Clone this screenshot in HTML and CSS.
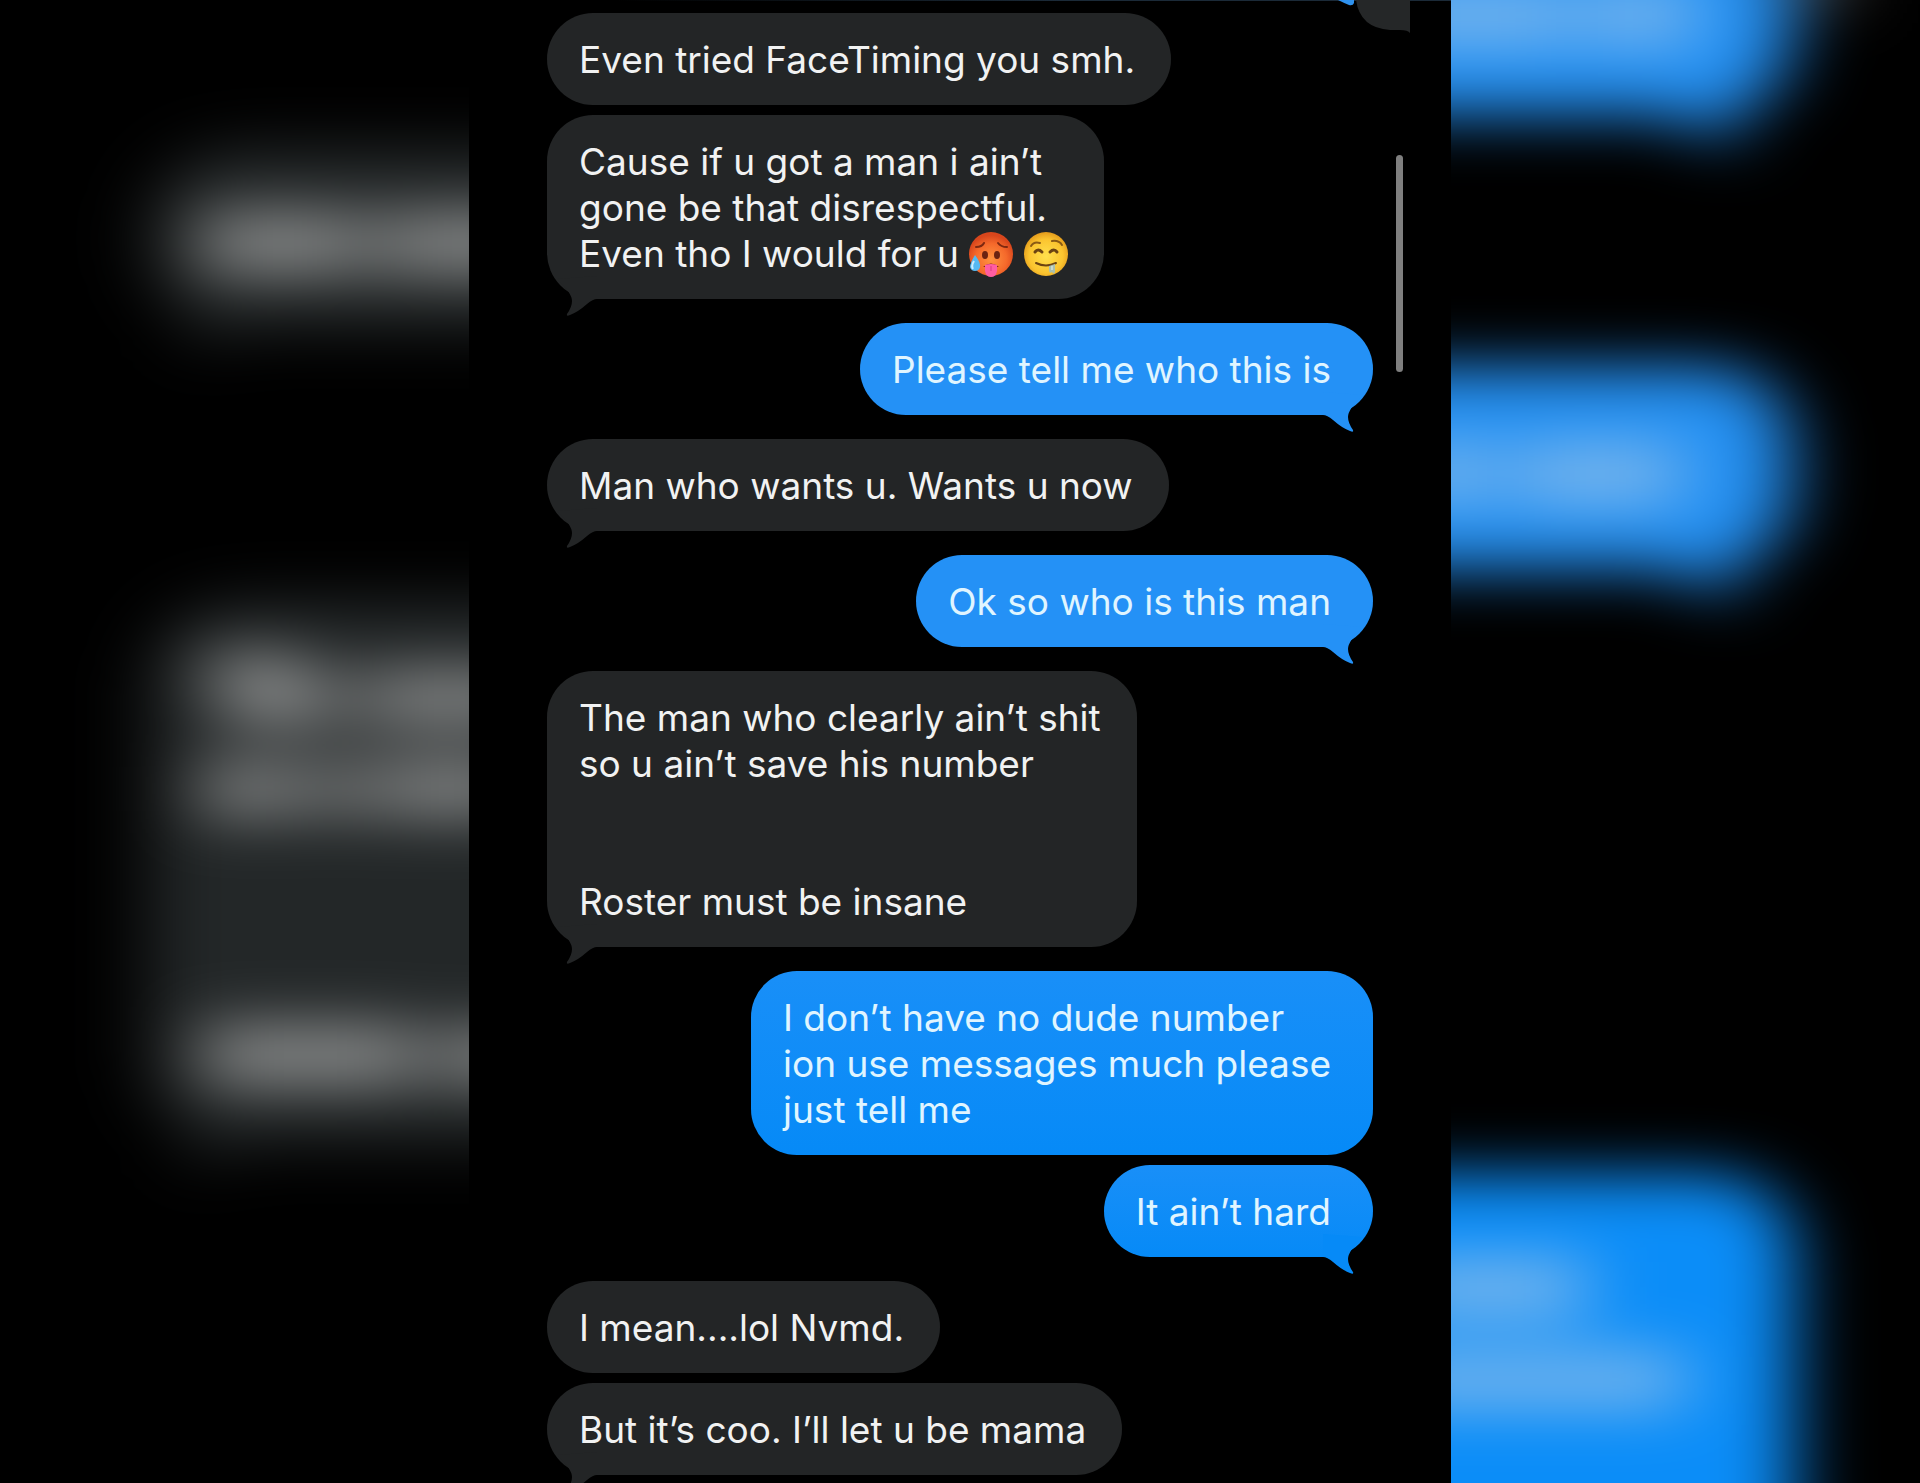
FILE: index.html
```
<!DOCTYPE html>
<html lang="en">
<head>
  <meta charset="UTF-8" />
  <meta name="viewport" content="width=device-width, initial-scale=1.0"/>
  <title>Messages</title>
  <link rel="stylesheet" href="styles.css">
</head>

<body>
  <!-- Blurred backdrop behind the conversation -->
  <svg class="backdrop" viewBox="0 0 1920 1483" preserveAspectRatio="xMidYMid slice" aria-hidden="true">
    <defs>
      <filter id="soft" filterUnits="userSpaceOnUse" x="-100" y="-200" width="2120" height="1900" color-interpolation-filters="sRGB">
        <feGaussianBlur stdDeviation="36 29"/>
      </filter>
    </defs>
    <g filter="url(#soft)">
      <g fill="#232728">
        <rect x="148" y="146" width="900" height="184" rx="90"/>
        <path d="M176 290 Q205 320 188 352 Q225 340 250 318 Z"/>
        <rect x="148" y="600" width="900" height="545" rx="90"/>
        <path d="M176 1105 Q205 1135 188 1174 Q225 1155 250 1133 Z"/>
      </g>
      <g fill="#8e9090">
        <rect x="200" y="214" width="165" height="58"/>
        <rect x="380" y="214" width="160" height="58"/>
        <rect x="205" y="656" width="100" height="36"/>
        <rect x="225" y="676" width="115" height="48"/>
        <rect x="362" y="672" width="170" height="52"/>
        <rect x="202" y="764" width="96" height="50"/>
        <rect x="312" y="764" width="48" height="50"/>
        <rect x="374" y="762" width="150" height="52"/>
        <rect x="202" y="1026" width="217" height="58"/>
        <rect x="438" y="1030" width="174" height="52"/>
      </g>
      <g fill="#2390f3">
        <rect x="1100" y="-80" width="692" height="196" rx="80"/>
        <path d="M1744 60 Q1712 98 1742 148 Q1695 136 1662 100 Z"/>
        <rect x="1100" y="366" width="692" height="204" rx="80"/>
        <path d="M1744 514 Q1712 552 1742 602 Q1695 590 1662 554 Z"/>
      </g>
      <rect x="1000" y="1174" width="794" height="420" rx="80" fill="#0b8df8"/>
      <g fill="#80b9ec">
        <rect x="1380" y="-12" width="190" height="54"/>
        <rect x="1584" y="-12" width="110" height="54"/>
        <rect x="1400" y="446" width="92" height="54"/>
        <rect x="1515" y="446" width="165" height="56"/>
        <rect x="1395" y="1260" width="190" height="56"/>
        <rect x="1380" y="1354" width="305" height="52"/>
      </g>
      <rect x="1800" y="-100" width="50" height="104" fill="#484848"/>
    </g>
  </svg>

  <main class="thread">
    <svg class="cut-bubble" viewBox="0 0 72 34" aria-hidden="true">
      <path d="M0 0 H16 V3 Q15 6 11 5 Q6 3 0 0 Z" fill="#2f92ee"/>
      <path d="M18 0 H72 V33 Q70 30 62 30 H52 Q22 28 18 0 Z" fill="#252728"/>
    </svg>

    <section class="group received">
      <p class="bubble">Even tried FaceTiming you smh.</p>
      <p class="bubble tail">Cause if u got a man i ain’t<br>gone be that disrespectful.<br>Even tho I would for u
        <svg class="emoji" viewBox="0 0 44 44" role="img" aria-label="hot face">
          <defs>
            <radialGradient id="hot" cx="50%" cy="62%" r="55%">
              <stop offset="0" stop-color="#ff9440"/>
              <stop offset="0.65" stop-color="#f5692b"/>
              <stop offset="1" stop-color="#d8461c"/>
            </radialGradient>
          </defs>
          <circle cx="22" cy="22" r="22" fill="url(#hot)"/>
          <path d="M7 15 Q13 15 15 11 M29 11 Q32 15 38 15" fill="none" stroke="#7d2810" stroke-width="2" stroke-linecap="round"/>
          <ellipse cx="16" cy="23" rx="3" ry="4" fill="#6b2311"/>
          <ellipse cx="28" cy="23" rx="3" ry="4" fill="#6b2311"/>
          <path d="M14 35 Q22 28 30 35 Z" fill="#6b1c16"/>
          <path d="M16 33 Q22 31 28 33 V39 Q27 45 22 45 Q17 45 16 39 Z" fill="#ff5da2"/>
          <path d="M22 34 V39" stroke="#d93b80" stroke-width="1"/>
          <path d="M6 23 Q12 31 11 35 Q10 39 6 39 Q2 39 1 35 Q1 31 6 23 Z" fill="#55b9f2"/>
          <path d="M5 29 Q2 34 4 37" fill="none" stroke="#c9edff" stroke-width="2"/>
        </svg>
        <svg class="emoji" viewBox="0 0 44 44" role="img" aria-label="drooling face">
          <defs>
            <radialGradient id="drool" cx="50%" cy="55%" r="55%">
              <stop offset="0" stop-color="#ffe04d"/>
              <stop offset="0.7" stop-color="#fbc42f"/>
              <stop offset="1" stop-color="#e39a1b"/>
            </radialGradient>
          </defs>
          <circle cx="22" cy="22" r="22" fill="url(#drool)"/>
          <path d="M7 14 Q10 9 16 11 M28 9 Q35 8 38 13" fill="none" stroke="#8a5a14" stroke-width="2" stroke-linecap="round"/>
          <path d="M11 20 Q14 16 18 20 M26 20 Q30 16 33 20" fill="none" stroke="#6b4312" stroke-width="3" stroke-linecap="round"/>
          <path d="M12 31 Q22 36 32 31" fill="none" stroke="#6b4312" stroke-width="2" stroke-linecap="round"/>
          <path d="M25 34 L31 32 V40 Q30 43 28 40 Q25 42 25 38 Z" fill="#a9bfae"/>
          <path d="M28 34 V38" stroke="#e9f5f0" stroke-width="1"/>
        </svg></p>
    </section>

    <section class="group sent">
      <p class="bubble tail">Please tell me who this is</p>
    </section>

    <section class="group received">
      <p class="bubble tail">Man who wants u. Wants u now</p>
    </section>

    <section class="group sent">
      <p class="bubble tail">Ok so who is this man</p>
    </section>

    <section class="group received">
      <p class="bubble tail">The man who clearly ain’t shit<br>so u ain’t save his number<br><br><br>Roster must be insane</p>
    </section>

    <section class="group sent deep">
      <p class="bubble">I don’t have no dude number<br>ion use messages much please<br>just tell me</p>
      <p class="bubble tail">It ain’t hard</p>
    </section>

    <section class="group received">
      <p class="bubble">I mean....lol Nvmd.</p>
      <p class="bubble tail">But it’s coo. I’ll let u be mama</p>
    </section>

    <div class="scrollbar"></div>
  </main>
</body>
</html>
```
FILE: styles.css
```
* {
  margin: 0;
  padding: 0;
  box-sizing: border-box;
}

body {
  position: relative;
  min-height: 100vh;
  background: #000;
  color: #f1f2f2;
  font-family: Inter, "Liberation Sans", sans-serif;
  font-size: 37px;
  line-height: 46px;
  overflow-x: hidden;
}

.backdrop {
  position: absolute;
  top: 0;
  left: 0;
  width: 100%;
  height: 100%;
}

.thread {
  position: relative;
  display: flex;
  flex-direction: column;
  gap: 24px;
  max-width: 982px;
  min-height: 100vh;
  margin: 0 auto;
  padding: 13px 78px 8px 78px;
  background: linear-gradient(to right, #000 15%, #1b2a38 60%) top / 100% 1px no-repeat #000;
  overflow: hidden;
}

.group {
  display: flex;
  flex-direction: column;
  gap: 10px;
}

.received {
  align-items: flex-start;
}

.sent {
  align-items: flex-end;
}

.bubble {
  position: relative;
  padding: 24px 36px 22px 32px;
  border-radius: 46px;
  background: #232526;
}

.sent .bubble {
  padding-right: 42px;
  background: #2491f6;
  color: #e0f5ff;
}

.deep .bubble {
  background: linear-gradient(#198ff8, #068af7);
}

/* little hook under the last bubble of a group */
.tail::after {
  content: "";
  position: absolute;
  left: 0;
  bottom: -17px;
  width: 50px;
  height: 40px;
  background: #232526;
  clip-path: path("M10 3 Q25 17 25 25 Q25 31 20 38 Q19 41 23 39 Q31 36 40 28 Q46 23 50 23 L50 0 Z");
}

.sent .tail::after {
  left: auto;
  right: 0;
  background: #2491f6;
  transform: scaleX(-1);
}

.deep .tail::after {
  background: #068af7;
}

.emoji {
  width: 44px;
  height: 44px;
  vertical-align: -9px;
  overflow: visible;
}

.cut-bubble {
  position: absolute;
  top: 0;
  right: 41px;
  width: 72px;
  height: 34px;
}

.scrollbar {
  position: absolute;
  top: 155px;
  right: 48px;
  width: 7px;
  height: 217px;
  border-radius: 4px;
  background: #7f7f7f;
}
```
